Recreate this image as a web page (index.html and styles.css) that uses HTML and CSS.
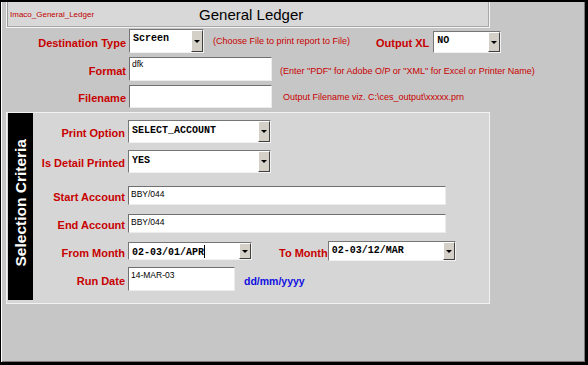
FILE: index.html
```html
<!DOCTYPE html>
<html>
<head>
    <title>General Ledger</title>
    <link rel="stylesheet" href="styles.css">
</head>
<body>
    <div class="window">
        <div class="titlebar">
            <span class="form-name">Imaco_General_Ledger</span>
            <span class="form-title">General Ledger</span>
        </div>

        <div class="row row-dest">
            <span class="lbl">Destination Type</span>
            <div class="select dest-select"><span class="val">Screen</span><span class="drop"></span></div>
            <span class="note note-dest">(Choose File to print report to File)</span>
            <span class="lbl-xl">Output XL</span>
            <div class="select xl-select"><span class="val">NO</span><span class="drop"></span></div>
        </div>

        <div class="row row-format">
            <span class="lbl">Format</span>
            <div class="field short-field">dfk</div>
            <span class="note note-format">(Enter "PDF" for Adobe O/P or "XML" for Excel or Printer Name)</span>
        </div>

        <div class="row row-file">
            <span class="lbl">Filename</span>
            <div class="field short-field"></div>
            <span class="note note-file">Output Filename viz. C:\ces_output\xxxxx.prn</span>
        </div>

        <div class="panel">
            <div class="tab"><span>Selection Criteria</span></div>
            <div class="criteria">
                <div class="prow prow-option">
                    <span class="plbl">Print Option</span>
                    <div class="select wide-select"><span class="val">SELECT_ACCOUNT</span><span class="drop"></span></div>
                </div>
                <div class="prow prow-detail">
                    <span class="plbl">Is Detail Printed</span>
                    <div class="select wide-select"><span class="val">YES</span><span class="drop"></span></div>
                </div>
                <div class="prow prow-start">
                    <span class="plbl">Start Account</span>
                    <div class="field account-field">BBY/044</div>
                </div>
                <div class="prow prow-end">
                    <span class="plbl">End Account</span>
                    <div class="field account-field">BBY/044</div>
                </div>
                <div class="prow prow-month">
                    <span class="plbl">From Month</span>
                    <div class="select from-select"><span class="val">02-03/01/APR<i class="caret"></i></span><span class="drop"></span></div>
                    <span class="plbl-to">To Month</span>
                    <div class="select to-select"><span class="val">02-03/12/MAR</span><span class="drop"></span></div>
                </div>
                <div class="prow prow-date">
                    <span class="plbl">Run Date</span>
                    <div class="field date-field">14-MAR-03</div>
                    <span class="date-hint">dd/mm/yyyy</span>
                </div>
            </div>
        </div>
    </div>
</body>
</html>
```

FILE: styles.css
```css
body {
    margin: 0;
    font-family: "Liberation Sans", Arial, sans-serif;
}

.window {
    width: 588px;
    height: 365px;
    box-sizing: border-box;
    background-color: #c6c6c6;
    border-style: solid;
    border-color: #000;
    border-width: 2px 3px 3px 1px;
    box-shadow: inset 1px 0 #fff, inset -1px -1px #7a7a7a;
}

/* title strip */
.titlebar {
    margin-left: 5px;
    width: 484px;
    height: 26px;
    box-sizing: border-box;
    background-color: #d8d8d8;
    border-style: solid;
    border-width: 0 1px 1px 1px;
    border-color: #f4f4f4;
    box-shadow: inset 1px 0 #9a9a9a, inset -1px -1px #a8a8a8;
    display: flex;
    align-items: center;
}

.form-name {
    font-size: 8px;
    color: #c00000;
    margin-left: 3px;
}

.form-title {
    font-size: 15px;
    color: #000;
    margin-left: 105px;
}

/* top rows */
.row {
    display: flex;
    align-items: center;
}

.row-dest {
    margin-top: 1px;
    height: 24px;
}

.row-format {
    margin-top: 4px;
    height: 24px;
}

.row-file {
    margin-top: 4px;
    height: 23px;
}

.lbl, .plbl, .lbl-xl, .plbl-to {
    font-size: 11px;
    font-weight: bold;
    color: #c80000;
    padding-top: 3px;
}

.lbl {
    width: 125px;
    text-align: right;
    margin-right: 3px;
}

.lbl-xl {
    margin-left: 26px;
    margin-right: 4px;
}

.note {
    font-size: 9px;
    color: #c80000;
}

.note-dest {
    margin-left: 9px;
}

.note-format {
    margin-left: 8px;
    padding-top: 3px;
}

.note-file {
    margin-left: 11px;
}

/* controls */
.select {
    display: flex;
    align-self: stretch;
    box-sizing: border-box;
    background-color: #fff;
    border: 1px solid;
    border-color: #767676 #f2f2f2 #f2f2f2 #767676;
}

.select .val {
    flex: 1;
    font-family: "Liberation Mono", "Courier New", monospace;
    font-weight: bold;
    font-size: 10px;
    color: #000;
    padding: 3px 0 0 3px;
    white-space: nowrap;
}

.drop {
    width: 12px;
    box-sizing: border-box;
    background-color: #d4d0c8;
    border: 1px solid;
    border-color: #fff #404040 #404040 #fff;
    display: flex;
    align-items: center;
    justify-content: center;
}

.drop::after {
    content: "";
    border-left: 3px solid transparent;
    border-right: 3px solid transparent;
    border-top: 3px solid #000;
}

.field {
    box-sizing: border-box;
    align-self: stretch;
    background-color: #fff;
    border: 1px solid;
    border-color: #6f6f6f #ececec #ececec #6f6f6f;
    font-size: 8.5px;
    color: #000;
    padding: 1px 0 0 2px;
}

.dest-select {
    width: 75px;
}

.xl-select {
    width: 68px;
    margin: 2px 0 0 0;
}

.short-field {
    width: 143px;
}

/* selection criteria panel */
.panel {
    margin: 4px 0 0 5px;
    width: 484px;
    height: 192px;
    box-sizing: border-box;
    background-color: #d6d6d6;
    border: 1px solid #f2f2f2;
    padding-left: 1px;
    display: flex;
    align-items: flex-start;
}

.tab {
    width: 25px;
    height: 187px;
    box-sizing: border-box;
    background-color: #000;
    padding-bottom: 8px;
    display: flex;
    align-items: center;
    justify-content: center;
}

.tab span {
    writing-mode: vertical-rl;
    transform: rotate(180deg);
    color: #fff;
    font-weight: bold;
    font-size: 15.5px;
    white-space: nowrap;
}

.criteria {
    display: flex;
    flex-direction: column;
}

.prow {
    display: flex;
    align-items: center;
}

.plbl {
    width: 92px;
    text-align: right;
    margin-right: 3px;
}

.prow-option {
    margin-top: 7px;
    height: 23px;
}

.prow-detail {
    margin-top: 7px;
    height: 23px;
}

.prow-start {
    margin-top: 13px;
    height: 19px;
}

.prow-end {
    margin-top: 9px;
    height: 19px;
}

.prow-month {
    margin-top: 8px;
    height: 20px;
}

.prow-date {
    margin-top: 6px;
    height: 24px;
}

.wide-select {
    width: 143px;
}

.wide-select .val {
    padding-top: 4px;
}

.account-field {
    width: 318px;
    padding-top: 2px;
}

.from-select {
    width: 124px;
    align-self: center;
    height: 18px;
}

.from-select .val {
    padding-top: 2px;
}

.caret {
    display: inline-block;
    width: 1px;
    height: 13px;
    background-color: #000;
    vertical-align: -3px;
}

.plbl-to {
    margin-left: 27px;
    margin-right: 0;
}

.to-select {
    width: 128px;
}

.date-field {
    width: 107px;
    padding-top: 2px;
}

.date-hint {
    margin-left: 9px;
    padding-top: 3px;
    font-size: 10.5px;
    font-weight: bold;
    color: #1010e0;
}
```
